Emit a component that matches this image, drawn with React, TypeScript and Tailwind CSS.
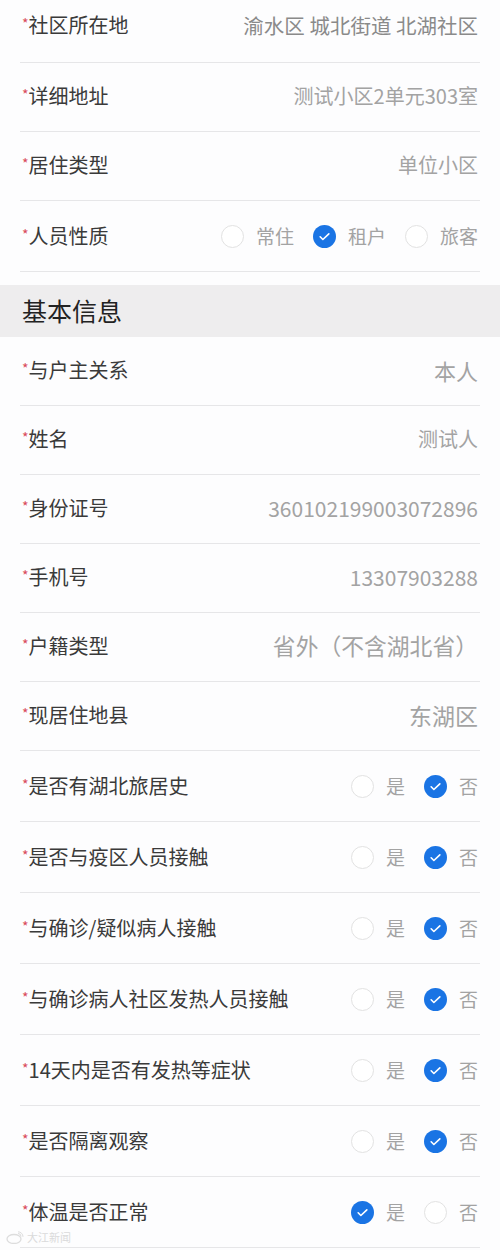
import React from "react";

type Field = {
  label: string;
  value?: string;
  size?: string;
  tone?: string;
  options?: string[];
  checked?: number;
  radio?: boolean;
  first?: boolean;
};

const topFields: Field[] = [
  { label: "社区所在地", value: "渝水区 城北街道 北湖社区", size: "text-[20.5px]", tone: "text-[#8a8a8a]", first: true },
  { label: "详细地址", value: "测试小区2单元303室", size: "text-[20px]" },
  { label: "居住类型", value: "单位小区", size: "text-[20px]" },
  { label: "人员性质", options: ["常住", "租户", "旅客"], checked: 1, radio: true },
];

const basicFields: Field[] = [
  { label: "与户主关系", value: "本人", size: "text-[22px]" },
  { label: "姓名", value: "测试人", size: "text-[20px]" },
  { label: "身份证号", value: "360102199003072896", size: "text-[21px]" },
  { label: "手机号", value: "13307903288", size: "text-[21px]" },
  { label: "户籍类型", value: "省外（不含湖北省）", size: "text-[22.8px]" },
  { label: "现居住地县", value: "东湖区", size: "text-[23px]" },
  { label: "是否有湖北旅居史", options: ["是", "否"], checked: 1, radio: true },
  { label: "是否与疫区人员接触", options: ["是", "否"], checked: 1, radio: true },
  { label: "与确诊/疑似病人接触", options: ["是", "否"], checked: 1, radio: true },
  { label: "与确诊病人社区发热人员接触", options: ["是", "否"], checked: 1, radio: true },
  { label: "14天内是否有发热等症状", options: ["是", "否"], checked: 1, radio: true },
  { label: "是否隔离观察", options: ["是", "否"], checked: 1, radio: true },
  { label: "体温是否正常", options: ["是", "否"], checked: 0, radio: true },
];

const Radio = ({ on }: { on: boolean }) =>
  on ? (
    <span className="flex h-[23px] w-[23px] items-center justify-center rounded-full bg-[#1a74e4]">
      <svg width="13" height="13" viewBox="0 0 24 24" fill="none">
        <path d="M4 12.5l5 5L20 7" stroke="#fff" strokeWidth="3" strokeLinecap="round" strokeLinejoin="round" />
      </svg>
    </span>
  ) : (
    <span className="h-[23px] w-[23px] rounded-full border border-[#e2e2e2] bg-white" />
  );

const Row = ({ f }: { f: Field }) => {
  const height = f.first ? "h-[63px] pb-[13px]" : f.radio ? "h-[71px]" : "h-[69px] pb-[3px]";
  return (
    <div className={`mx-[20px] flex items-center justify-between border-b border-[#e6e6e8] pl-[2px] pr-[2px] ${height}`}>
      <div className="flex items-start text-[20px] leading-[26px] text-[#3a3a3a]">
        <span className="mt-[-2px] text-[14px] text-[#d94a5a]">*</span>
        <span>{f.label}</span>
      </div>
      {f.radio ? (
        <div className="flex items-center">
          {f.options!.map((o, i) => (
            <div key={o} className={`flex items-center ${i > 0 ? "ml-[19px]" : ""}`}>
              <Radio on={i === f.checked} />
              <span className="ml-[12px] text-[19px] leading-[26px] text-[#a3a3a3]">{o}</span>
            </div>
          ))}
        </div>
      ) : (
        <span className={`${f.size} ${f.tone ?? "text-[#a3a3a3]"} leading-[26px] whitespace-nowrap`}>{f.value}</span>
      )}
    </div>
  );
};

export default function App() {
  return (
    <div
      className="relative w-[500px] h-[1250px] overflow-hidden bg-[#fdfdfe]"
      style={{ fontFamily: '"Noto Sans CJK SC", "Noto Sans", sans-serif' }}
    >
      {topFields.map((f) => (
        <Row key={f.label} f={f} />
      ))}

      <div className="mt-[13px] flex h-[52px] items-center bg-[#eeedee] px-[22px]">
        <span className="text-[25px] text-[#222]">基本信息</span>
      </div>

      {basicFields.map((f) => (
        <Row key={f.label} f={f} />
      ))}

      {/* watermark */}
      <div className="absolute bottom-[6px] left-[6px] flex items-center gap-[3px] opacity-60">
        <svg width="18" height="13" viewBox="0 0 18 13" fill="none">
          <ellipse cx="8" cy="8" rx="7" ry="4.5" stroke="#c8c8c8" strokeWidth="1.3" />
          <path d="M12 2.5a3 3 0 013 3M12 0.8a5 5 0 015 5" stroke="#c8c8c8" strokeWidth="1" />
        </svg>
        <span className="text-[11px] leading-none text-[#c4c4c4]">大江新闻</span>
      </div>
    </div>
  );
}
